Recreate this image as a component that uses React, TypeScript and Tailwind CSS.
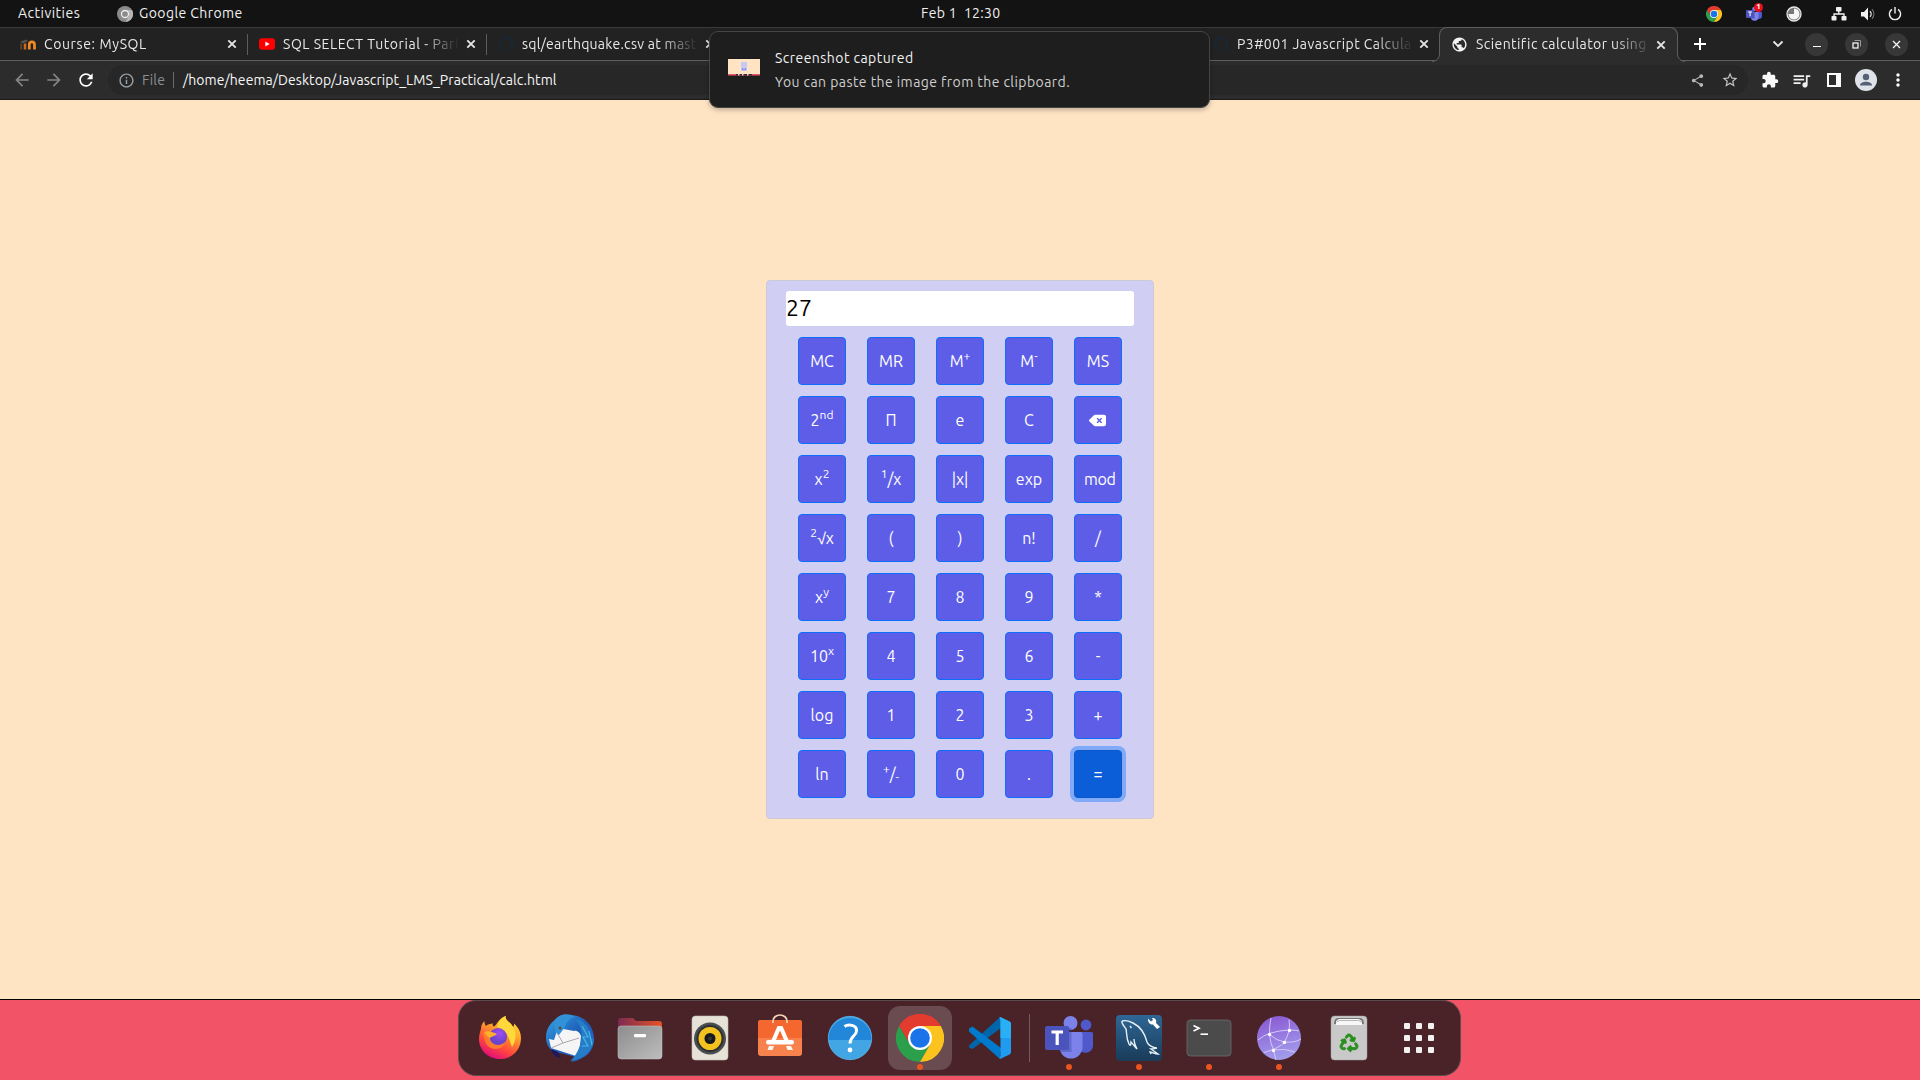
import type { ReactNode } from "react";
import {
  MdArrowBack,
  MdArrowForward,
  MdExtension,
  MdInfoOutline,
  MdMoreVert,
  MdPublic,
  MdQueueMusic,
  MdRefresh,
  MdShare,
  MdStarBorder,
} from "react-icons/md";
import { FaDeleteLeft, FaGithub, FaRecycle } from "react-icons/fa6";

/* ---------- shared drawings ---------- */

function Chrome({ size }: { size: number }) {
  return (
    <svg width={size} height={size} viewBox="0 0 48 48">
      <path d="M3.2 12A24 24 0 0 1 44.8 12H24L13.6 30Z" fill="#e33b2e" />
      <path d="M13.6 30L3.2 12A24 24 0 0 0 24 48L34.4 30Z" fill="#2b9f4b" />
      <path d="M34.4 30L24 48A24 24 0 0 0 44.8 12H24Z" fill="#fcc31e" />
      <circle cx="24" cy="24" r="12" fill="#fff" />
      <circle cx="24" cy="24" r="9.8" fill="#1a73e8" />
    </svg>
  );
}

function Teams({ size }: { size: number }) {
  return (
    <svg width={size} height={size} viewBox="0 0 48 48">
      <circle cx="41" cy="11" r="5.4" fill="#5059c9" />
      <path d="M34 18h12.500a1.500 1.500 0 0 1 1.500 1.500V31a7.500 7.500 0 0 1-14 4z" fill="#5059c9" />
      <circle cx="25.500" cy="9" r="7" fill="#7b83eb" />
      <path d="M15 18h20.500a2 2 0 0 1 2 2v13a11.500 11.500 0 0 1-23 0z" fill="#7b83eb" />
      <path d="M14.500 38h12V14H14.500z" fill="#343a91" opacity=".35" />
      <rect x="0" y="12" width="24" height="24" rx="2" fill="#4b53bc" />
      <path d="M6.500 16.500h11.500v3H13.800v11.500h-3.200V19.500H6.500z" fill="#fff" />
    </svg>
  );
}

function Close({ className }: { className?: string }) {
  return (
    <svg width="10" height="10" viewBox="0 0 10 10" className={className}>
      <path d="M1.300 1.300l7.400 7.400M8.700 1.300L1.300 8.700" stroke="#e4e4e4" strokeWidth="1.900" />
    </svg>
  );
}

/* ---------- desktop top bar ---------- */

function TopBar() {
  return (
    <header className="relative flex h-[27px] shrink-0 items-center bg-[#131313] text-[14px] text-[#f0f0f0]">
      <span className="ml-[18px] w-[99px] tracking-[0.48px]">Activities</span>
      <svg width="16" height="16" viewBox="0 0 16 16">
        <circle cx="8" cy="8" r="8" fill="#8b8b8b" />
        <path d="M8 4H15A8 8 0 0 1 8.500 16L12 9.500Z" fill="#b5b5b5" />
        <circle cx="8" cy="8" r="3.500" fill="#8a8a8a" stroke="#eee" strokeWidth="1.300" />
      </svg>
      <span className="ml-[6px] tracking-[0.42px]">Google Chrome</span>
      <span className="absolute left-[921px] tracking-[0.3px] whitespace-pre">Feb 1  12:30</span>
      <div className="ml-auto flex items-center">
        <Chrome size={16} />
        <div className="relative ml-[24px]">
          <Teams size={16} />
          <span className="absolute -top-[3px] left-[8px] flex h-[9px] w-[9px] items-center justify-center rounded-full bg-[#e8101c] text-[8px] leading-none font-bold text-white">
            1
          </span>
        </div>
        <svg width="16" height="16" viewBox="0 0 16 16" className="ml-[24px]">
          <circle cx="8" cy="8" r="7" fill="#777" stroke="#e8e8e8" strokeWidth="1.300" />
          <path d="M8 8V2.500A5.500 5.500 0 1 1 2.500 8Z" fill="#f5f5f5" />
        </svg>
        <svg width="16" height="14" viewBox="0 0 16 14" className="ml-[29px]" fill="#f2f2f2">
          <rect x="5" y="0" width="5.500" height="4.500" rx=".8" />
          <rect x="0.500" y="9" width="5" height="4.500" rx=".8" />
          <rect x="10.500" y="9" width="5" height="4.500" rx=".8" />
          <path d="M7.800 4v3M3 9.500V7h10v2.500" stroke="#f2f2f2" strokeWidth="1.300" fill="none" />
        </svg>
        <svg width="16" height="14" viewBox="0 0 16 14" className="ml-[13px]" fill="none">
          <path d="M1 5h3l4-4.500v13L4 9.500H1z" fill="#f2f2f2" />
          <path d="M10 4.200a4 4 0 0 1 0 5.600" stroke="#e8e8e8" strokeWidth="1.300" />
          <path d="M12 2.200a7 7 0 0 1 0 9.600" stroke="#6e6e6e" strokeWidth="1.200" />
        </svg>
        <svg width="14" height="14" viewBox="0 0 14 14" className="mr-[18px] ml-[12px]" fill="none" stroke="#eee" strokeWidth="1.400">
          <path d="M4 2.300a5.600 5.600 0 1 0 6 0M7 0v6.500" />
        </svg>
      </div>
    </header>
  );
}

/* ---------- browser tabs ---------- */

function TabTitle({ children, className }: { children: ReactNode; className?: string }) {
  return (
    <span
      className={
        "ml-[8px] w-[176px] overflow-hidden whitespace-nowrap [mask-image:linear-gradient(to_right,black_78%,transparent_100%)] " +
        (className ?? "")
      }
    >
      {children}
    </span>
  );
}

function Tab({ icon, title, spacing }: { icon?: ReactNode; title?: string; spacing?: string }) {
  return (
    <div className="flex h-[34px] w-[239px] shrink-0 items-center">
      <div className="flex w-[238px] items-center pl-[11px]">
        {icon}
        {title && (
          <>
            <TabTitle className={spacing}>{title}</TabTitle>
            <Close className="ml-[7px]" />
          </>
        )}
      </div>
      {title && <div className="h-[21px] w-px bg-[#5c5c5c]" />}
    </div>
  );
}

const github = <FaGithub size={16} color="#1d262f" />;

function WindowButton({ children }: { children: ReactNode }) {
  return (
    <div className="flex h-[23px] w-[23px] items-center justify-center rounded-full bg-[#373737]">{children}</div>
  );
}

function TabStrip() {
  return (
    <div className="flex h-[34px] shrink-0 items-center border-t border-b border-t-[#3a3a3a] border-b-[#5e5e5e] bg-[#222222] pl-[9px] text-[14px] text-[#e8e8e8]">
      <Tab
        icon={
          <svg width="16" height="16" viewBox="0 0 16 16" fill="none">
            <path d="M1.200 13.500V7.500" stroke="#5b4030" strokeWidth="2" />
            <path d="M0 5.500L6.500 3.500L8 5L3 7.500z" fill="#55504c" />
            <path d="M5 13.500V7.500" stroke="#c66c1e" strokeWidth="2.500" />
            <path d="M9.300 13.500V8.500a2.600 2.600 0 0 1 5.200 0v5" stroke="#f08a24" strokeWidth="2.700" />
          </svg>
        }
        title="Course: MySQL"
        spacing="tracking-[0.62px]"
      />
      <Tab
        icon={
          <svg width="16" height="16" viewBox="0 0 16 16">
            <rect x="0" y="2.300" width="16" height="11.500" rx="3" fill="#f00" />
            <path d="M6.300 5.500v5L10.600 8z" fill="#fff" />
          </svg>
        }
        title="SQL SELECT Tutorial - Part 1"
        spacing="tracking-[0.55px]"
      />
      <Tab icon={github} title="sql/earthquake.csv at master" spacing="tracking-[0.27px]" />
      <Tab />
      <Tab />
      <div className="flex h-[34px] w-[235px] shrink-0 items-center pl-[9px]">
        {github}
        <TabTitle className="tracking-[0.45px]">P3#001 Javascript Calculator</TabTitle>
        <Close className="ml-[6px]" />
      </div>
      <div className="relative z-10 flex h-[34px] w-[239px] shrink-0 items-center rounded-t-[8px] border-x border-t border-[#5e5e5e] bg-[#2c2c2c] pl-[11px]">
        <MdPublic size={17} color="#f4f4f4" />
        <TabTitle className="tracking-[0.42px]">Scientific calculator using js</TabTitle>
        <Close className="ml-[4px]" />
        <svg width="8" height="8" viewBox="0 0 8 8" className="absolute -bottom-px -left-[8px]">
          <path d="M8 0v8H0A7.500 7.500 0 0 0 7.500 0z" fill="#2c2c2c" />
          <path d="M0 7.500A7.500 7.500 0 0 0 7.500 0" fill="none" stroke="#5e5e5e" />
        </svg>
        <svg width="8" height="8" viewBox="0 0 8 8" className="absolute -right-[8px] -bottom-px">
          <path d="M0 0v8H8A7.500 7.500 0 0 1 .5 0z" fill="#2c2c2c" />
          <path d="M8 7.500A7.500 7.500 0 0 1 .5 0" fill="none" stroke="#5e5e5e" />
        </svg>
        <div className="absolute inset-x-0 -bottom-px h-[2px] bg-[#2c2c2c]" />
      </div>
      <svg width="12" height="12" viewBox="0 0 12 12" className="ml-[16px]">
        <path d="M6 0v12M0 6h12" stroke="#fff" strokeWidth="2" />
      </svg>
      <div className="mr-[12px] ml-auto flex items-center gap-[17px]">
        <svg width="12" height="8" viewBox="0 0 12 8" className="mr-[4px]">
          <path d="M1.500 1.500L6 6l4.500-4.500" fill="none" stroke="#e6e6e6" strokeWidth="1.900" />
        </svg>
        <WindowButton>
          <div className="mt-[5px] h-px w-[8px] bg-white" />
        </WindowButton>
        <WindowButton>
          <svg width="9" height="9" viewBox="0 0 9 9" fill="none">
            <path d="M2.500 .5h6v6" stroke="#9a9a9a" />
            <rect x="1" y="3" width="5" height="5" stroke="#fff" strokeWidth="1.200" />
          </svg>
        </WindowButton>
        <WindowButton>
          <svg width="9" height="9" viewBox="0 0 9 9">
            <path d="M1 1l7 7M8 1L1 8" stroke="#f4f4f4" strokeWidth="1.300" />
          </svg>
        </WindowButton>
      </div>
    </div>
  );
}

/* ---------- address bar ---------- */

function Toolbar() {
  return (
    <div className="flex h-[39px] shrink-0 items-center border-b border-[#191919] bg-[#2c2c2c] pl-[12px]">
      <MdArrowBack size={20} color="#858585" />
      <MdArrowForward size={20} color="#858585" className="ml-[12px]" />
      <MdRefresh size={20} color="#fff" className="ml-[12px]" />
      <div className="ml-[12px] flex h-[30px] w-[1640px] items-center rounded-full bg-[#272727] pl-[10px] text-[14px]">
        <MdInfoOutline size={17} color="#9aa0a6" />
        <span className="ml-[7px] w-[31px] tracking-[0.3px] text-[#8c8f92]">File</span>
        <div className="h-[16px] w-px bg-[#6a6a6a]" />
        <span className="ml-[9px] tracking-[0.07px] text-[#f7f7f7]">
          /home/heema/Desktop/Javascript_LMS_Practical/calc.html
        </span>
        <MdShare size={15} color="#b9b9b9" className="ml-auto" />
        <MdStarBorder size={18} color="#c4c4c4" className="mr-[9px] ml-[16px]" />
      </div>
      <MdExtension size={18} color="#fafafa" className="ml-[13px]" />
      <MdQueueMusic size={21} color="#f0f0f0" className="ml-[12px]" />
      <svg width="14" height="14" viewBox="0 0 14 14" className="ml-[15px]">
        <path d="M0 0h14v14H0zM2 2v10h7V2z" fill="#fafafa" fillRule="evenodd" />
      </svg>
      <svg width="22" height="22" viewBox="0 0 22 22" className="ml-[14px]">
        <circle cx="11" cy="11" r="11" fill="#dfe2e8" />
        <circle cx="11" cy="8" r="3.200" fill="#566176" />
        <path d="M5 16.500c0-5 12-5 12 0z" fill="#566176" />
      </svg>
      <MdMoreVert size={20} color="#fff" className="ml-[11px]" />
    </div>
  );
}

/* ---------- notification banner ---------- */

function Notification() {
  return (
    <div className="absolute top-[31px] left-[709px] z-20 flex h-[77px] w-[501px] items-center rounded-[9px] border border-[#454545] bg-[#1e1e1e] pl-[18px] text-[14px] shadow-[0_2px_5px_rgba(0,0,0,0.25)]">
      <svg width="32" height="20" viewBox="0 0 32 20" className="-mt-[7px]">
        <rect width="32" height="2" y="1" fill="#1b1b1b" />
        <rect y="3" width="32" height="15" fill="#ffe4c4" />
        <rect x="13" y="6" width="6" height="9" fill="#c9c8f5" />
        <path d="M14 12.500h1.500v1.500H14zM16.500 12.500h1.500v1.500h-1.500z" fill="#6f70e8" />
        <rect y="18" width="32" height="1.500" fill="#ee5466" />
        <rect x="8" y="18" width="16" height="1.500" fill="#4a2228" />
        <path d="M10 18h1.500v1.500H10zM14 18h1.500v1.500H14zM19 18h1.500v1.500H19z" fill="#ddd" />
      </svg>
      <div className="ml-[15px] flex flex-col gap-[4px] leading-[20px]">
        <span className="tracking-[0.45px] text-[#f2f2f2]">Screenshot captured</span>
        <span className="tracking-[0.43px] text-[#cfcfcf]">You can paste the image from the clipboard.</span>
      </div>
    </div>
  );
}

/* ---------- calculator ---------- */

const sup = "relative -top-[5px] text-[12px] leading-none";

const keys: ReactNode[] = [
  "MC", "MR", <>M<span className={sup}>+</span></>, <>M<span className={sup}>-</span></>, "MS",
  <>2<span className={sup}>nd</span></>, "Π", "e", "C", <FaDeleteLeft size={17} className="mr-px" />,
  <>x<span className={sup}>2</span></>, <><span className={sup}>1</span>/x</>, "|x|", "exp", "mod",
  <><span className={sup}>2</span>√x</>, "(", ")", "n!", "/",
  <>x<span className={sup}>y</span></>, "7", "8", "9", "*",
  <>10<span className={sup}>x</span></>, "4", "5", "6", "-",
  "log", "1", "2", "3", "+",
  "ln", <><span className={sup}>+</span>/<span className="relative top-[3px] text-[12px] leading-none">-</span></>, "0", ".", "=",
];

function Calculator() {
  return (
    <div className="mx-auto mt-[180px] h-[539px] w-[388px] rounded-[4px] border border-[#cac9d6] bg-[#d0cef3] px-[19px] pt-[10px]">
      <div className="flex h-[35px] w-[348px] items-center rounded-[3px] bg-white pb-[2px] text-[23px] leading-none text-black">
        27
      </div>
      <div className="mt-[11px] ml-[12px] grid w-[324px] grid-cols-[repeat(5,48px)] gap-x-[21px] gap-y-[11px]">
        {keys.map((key, i) => {
          const pressed = key === "=";
          return (
            <button
              key={i}
              className={
                "flex h-[48px] w-[48px] items-center rounded-[4px] border text-[16px] leading-none whitespace-nowrap text-white " +
                (key === "mod" ? "justify-start pl-[9px] tracking-[-0.3px] " : "justify-center ") +
                (pressed
                  ? "border-[#0a58ca] bg-[#0b5ed7] shadow-[0_0_0_4px_#80a9f8]"
                  : "border-[#0d6efd] bg-[#5e5de7]")
              }
            >
              {key}
            </button>
          );
        })}
      </div>
    </div>
  );
}

/* ---------- dock ---------- */

function Art({ children }: { children: ReactNode }) {
  return (
    <svg width="48" height="48" viewBox="0 0 48 48">
      {children}
    </svg>
  );
}

function DockItem({ children, running, active }: { children: ReactNode; running?: boolean; active?: boolean }) {
  return (
    <div className="relative h-[48px] w-[48px]">
      {active && <div className="absolute -inset-[8px] rounded-[12px] bg-[#694b50]" />}
      <div className="relative">{children}</div>
      {running && <div className="absolute -bottom-[8px] left-[21px] h-[6px] w-[6px] rounded-full bg-[#e95420]" />}
    </div>
  );
}

const Firefox = () => (
  <Art>
    <defs>
      <linearGradient id="ffBody" x1=".8" y1="0" x2=".3" y2="1">
        <stop offset="0" stopColor="#ffe940" />
        <stop offset=".35" stopColor="#ffa52a" />
        <stop offset=".7" stopColor="#ff4a3b" />
        <stop offset="1" stopColor="#e2087f" />
      </linearGradient>
      <radialGradient id="ffGlobe" cx=".6" cy=".3">
        <stop offset="0" stopColor="#a44af5" />
        <stop offset="1" stopColor="#6a45c9" />
      </radialGradient>
    </defs>
    <path d="M5 15C5 11 7 8 8.500 7.500C8.500 9 9 11 10 12C12 10 14 10 17 9.500C16 11 17 12 18 12.500C21 11 22 5 29.500 2C29.500 6 32 7 35 10L37 13C38 12 38 11 38 9.500C43 14 45 19 45 24C45 36 36 45 24 45C12 45 3 36 3 25C3 21 4 18 5 15Z" fill="url(#ffBody)" />
    <path d="M29.500 2C29.500 6 32 7 35 10C41 17 41 25 36 33C33 25 32 16 21 13C23 7 25 4 29.500 2Z" fill="#ffd93a" />
    <circle cx="22" cy="23" r="9" fill="url(#ffGlobe)" />
    <path d="M7 19C10 17 13 18 15 20C13 24 14 28 18 30C21 32 26 31 29 28C28 35 17 38 11 31C8 27 8 22 7 19Z" fill="#ff7a2c" />
    <path d="M8 18C12 16 17 18 21 20C18 23 15 22 14 24C11 23 10 20 8 18Z" fill="#ffae2d" />
  </Art>
);

const Thunderbird = () => (
  <Art>
    <defs>
      <linearGradient id="tbBody" x1="0" y1="0" x2="1" y2="1">
        <stop offset="0" stopColor="#35a5e6" />
        <stop offset=".5" stopColor="#1e5fb8" />
        <stop offset="1" stopColor="#2d66cf" />
      </linearGradient>
    </defs>
    <path d="M14 3C16 0 19 0 22 1C37 0 48 11 48 25C48 37 40 45 25 48C28 46 29 45 30 43L6 37C2 33 0 29 0 23C0 14 6 6 14 3Z" fill="url(#tbBody)" />
    <path d="M5 35C6 40 9 43 15 44L12 38Z" fill="#241657" />
    <path d="M12 14L28 17C31 16 34 19 35 22L33 43L5 34L3 25L8 26Z" fill="#f6f5f6" />
    <path d="M10 17L17 29L33 24M17 29L5 34" fill="none" stroke="#aaa7ae" />
    <path d="M8 7C13 -1 24 -1 29 3C24 4 20 8 19 13L13 21C9 19 8 12 8 7Z" fill="#3192d8" />
    <path d="M29 5C35 12 38 20 34 31C32 38 28 44 24 47C39 45 47 36 48 25C44 27 45 16 40 11C37 7 33 5 29 5Z" fill="#277cc7" />
    <path d="M36 12L42 23L37 23L42 32L36 32M43 17L46 31" fill="none" stroke="#46b5e5" strokeWidth="1.200" />
    <circle cx="14" cy="14" r="1.500" fill="#5b4a37" />
  </Art>
);

const Files = () => (
  <Art>
    <defs>
      <linearGradient id="fBack">
        <stop offset="0" stopColor="#7c2a54" />
        <stop offset="1" stopColor="#e65324" />
      </linearGradient>
      <linearGradient id="fFront" x1="0" y1="0" x2="1" y2="1">
        <stop offset="0" stopColor="#8d8d8d" />
        <stop offset="1" stopColor="#bdbdbd" />
      </linearGradient>
    </defs>
    <path d="M2 7a3 3 0 0 1 3-3h12l3 3h23a3 3 0 0 1 3 3v10H2z" fill="url(#fBack)" />
    <rect x="2" y="12" width="44" height="33" rx="3" fill="url(#fFront)" stroke="#c4c4c4" strokeWidth=".5" />
    <rect x="18" y="20" width="12" height="3.300" rx="1" fill="#fff" />
  </Art>
);

const Rhythmbox = () => (
  <Art>
    <rect x="6" y="2" width="36" height="44" rx="3.500" fill="#e6e2d8" stroke="#c8c2b6" strokeWidth=".6" />
    <circle cx="24" cy="24.500" r="16" fill="#4a4e50" />
    <circle cx="24" cy="24.500" r="13.500" fill="#2c3033" />
    <circle cx="24" cy="24.500" r="11.500" fill="#f3c21f" />
    <circle cx="24" cy="24.500" r="5.500" fill="#161a1d" />
    <circle cx="24" cy="24.500" r="2" fill="#303538" />
  </Art>
);

const Software = () => (
  <Art>
    <rect x="2" y="6" width="44" height="36" rx="3" fill="#f7824d" />
    <path d="M2 24V9a3 3 0 0 1 3-3h38a3 3 0 0 1 3 3v15z" fill="#f4672f" />
    <path d="M17 9V7a7 6 0 0 1 14 0v2" fill="none" stroke="#f3d6b4" strokeWidth="1.700" />
    <path d="M21.500 12h5L33 27h-4.500L24 16.500L19.500 27H15z" fill="#fff" />
    <rect x="10" y="26" width="28" height="4.500" rx="2.200" fill="#fff" />
    <path d="M13 32h5l-1.500 4h-5zM30 32h5l2 4h-5.500z" fill="#fff" opacity=".92" />
  </Art>
);

const Help = () => (
  <Art>
    <circle cx="24" cy="24" r="22" fill="#42a5e4" />
    <path d="M2 26A22 22 0 0 1 46 26Z" fill="#2286d9" />
    <circle cx="24" cy="24" r="21.700" fill="none" stroke="#63b4e8" strokeWidth=".6" />
    <path d="M18.500 12.500C22 10 31 10.500 30.500 17C30.200 22 24 22.500 24 29.500" fill="none" stroke="#fff" strokeWidth="3" />
    <circle cx="24" cy="36" r="2.400" fill="#fff" />
  </Art>
);

const VsCode = () => (
  <Art>
    <path d="M3 31.500L34 3L35 14L6.500 35L3 33.500Z" fill="#0065a9" />
    <path d="M3 14.500L6.500 12.500L35 34L34 45L3 17.500Z" fill="#007acc" />
    <path d="M34 3L43.500 7.500Q45 8.300 45 10V38Q45 39.700 43.500 40.500L34 45Q33 44.500 34.500 42V6Q33 3.500 34 3Z" fill="#1f9cf0" />
    <path d="M34 3L43.500 7.500Q45 8.300 45 10V24H34.500V6Q33 3.500 34 3Z" fill="#29aff5" />
  </Art>
);

const MySql = () => (
  <Art>
    <defs>
      <linearGradient id="my" x2="0" y2="1">
        <stop offset="0" stopColor="#2f6796" />
        <stop offset="1" stopColor="#193b58" />
      </linearGradient>
    </defs>
    <rect x="1" y="1" width="46" height="46" rx="4" fill="url(#my)" />
    <path d="M7 7C10 6 14 7 18 9C26 13 30 20 32 28C33 31 38 34 42 34C38 35 36 35 36 35L43 40C40 40 37 38 35 38C36 40 36 40 35 38M7 7C6 9 9 12 11 15C12 19 11 24 14 30C15 32 16 32 16 28C18 30 20 33 22 35C20 31 19 28 19 25M15 12l1.500 2" fill="none" stroke="#e7f0f6" strokeWidth="1.400" />
    <path d="M33 4.500L36 7.500L38 6L37 4C40 3.500 42 6 41 9L45 13L42 15L38 10.500C35 11 32.500 8 33 4.500Z" fill="#fff" />
  </Art>
);

const Terminal = () => (
  <Art>
    <rect x="2" y="6" width="44" height="36" rx="3.500" fill="#4b4b4b" stroke="#6d6d6d" strokeWidth=".8" />
    <path d="M8.500 11.500L14 14.300L8.500 17" fill="none" stroke="#fff" strokeWidth="1.700" />
    <path d="M15.500 20.200h7.500" stroke="#fff" strokeWidth="1.600" />
  </Art>
);

const Network = () => (
  <Art>
    <defs>
      <linearGradient id="net" x1=".2" x2=".5" y2="1">
        <stop offset="0" stopColor="#8a58d2" />
        <stop offset="1" stopColor="#a29ded" />
      </linearGradient>
    </defs>
    <circle cx="24" cy="24" r="22" fill="url(#net)" />
    <g fill="none" stroke="#d7c9f7" strokeWidth="1">
      <path d="M16 4Q12 22 18.500 36L21 46M34 5.500Q36 17 29.500 28Q25 34 9 38.500M3 26Q13 17 34.500 16Q41 16 44 17M14.500 20.500Q22 27 29.500 28Q40 29 46 25M18.500 36Q30 34 40 38" />
    </g>
    <g fill="#fff">
      <circle cx="14.500" cy="20.500" r="1.700" />
      <circle cx="34.500" cy="16.500" r="1.700" />
      <circle cx="29.500" cy="28.500" r="1.700" />
      <circle cx="18.500" cy="36.500" r="1.700" />
    </g>
  </Art>
);

const Trash = () => (
  <div className="relative flex h-[48px] w-[48px] justify-center">
    <Art>
      <rect x="6" y="2" width="36" height="44" rx="3.500" fill="#c9c9c9" stroke="#a3a3a3" strokeWidth=".5" />
      <path d="M9 10Q9 4 13 4h22Q39 4 39 10z" fill="#777" />
      <path d="M11 11V7l3-2h20l3 2v4z" fill="#f7f7f7" />
      <path d="M11.500 8l3-1.500h19L37 8" fill="none" stroke="#999" strokeWidth=".7" />
    </Art>
    <FaRecycle size={18} color="#278f1d" stroke="#278f1d" strokeWidth={26} className="absolute top-[20px] left-[15px] overflow-visible" />
  </div>
);

const AppGrid = () => (
  <div className="grid grid-cols-3 gap-[6px] p-[9px]">
    {Array.from({ length: 9 }, (_, i) => (
      <div key={i} className="h-[6px] w-[6px] rounded-[1px] bg-[#f2f0f0]" />
    ))}
  </div>
);

function Dock() {
  return (
    <div className="flex h-[81px] shrink-0 items-start border-t border-black bg-[#f25367] pl-[458px]">
      <div className="flex h-[76px] w-[1003px] items-center rounded-[18px] border border-[#5b4d4f] bg-[#492328] pl-[17px]">
        <div className="flex gap-[22px]">
          <DockItem><Firefox /></DockItem>
          <DockItem><Thunderbird /></DockItem>
          <DockItem><Files /></DockItem>
          <DockItem><Rhythmbox /></DockItem>
          <DockItem><Software /></DockItem>
          <DockItem><Help /></DockItem>
          <DockItem running active><Chrome size={48} /></DockItem>
          <DockItem><VsCode /></DockItem>
        </div>
        <div className="mx-[15px] h-[48px] w-px bg-[#77595d]" />
        <div className="flex gap-[22px]">
          <DockItem running><Teams size={48} /></DockItem>
          <DockItem running><MySql /></DockItem>
          <DockItem running><Terminal /></DockItem>
          <DockItem running><Network /></DockItem>
          <DockItem><Trash /></DockItem>
          <DockItem><AppGrid /></DockItem>
        </div>
      </div>
    </div>
  );
}

export default function App() {
  return (
    <div className="relative flex h-[1080px] w-[1920px] flex-col overflow-hidden bg-[#ffe4c4] font-['Ubuntu','Noto_Sans',sans-serif]">
      <TopBar />
      <TabStrip />
      <Toolbar />
      <Notification />
      <main className="flex-1 overflow-hidden bg-[#ffe4c4]">
        <Calculator />
      </main>
      <Dock />
    </div>
  );
}
